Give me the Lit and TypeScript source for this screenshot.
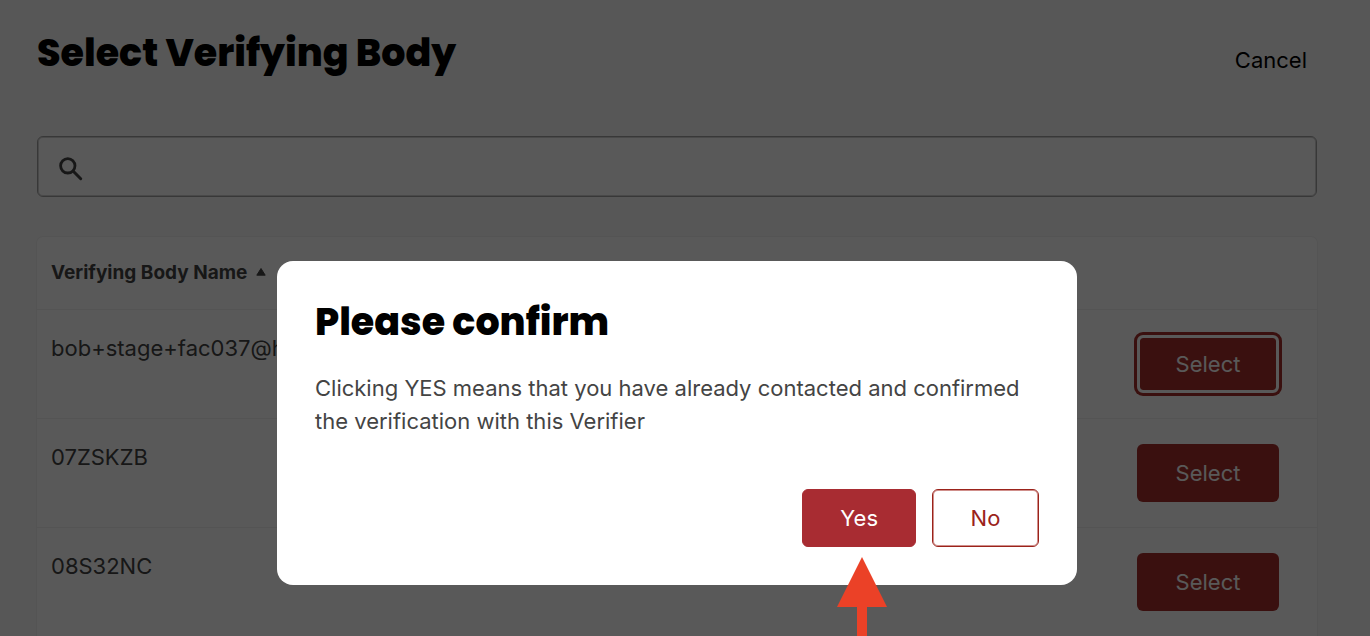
import { LitElement, html, css } from "lit";
import { customElement, property, state } from "lit/decorators.js";

@customElement("confirm-dialog")
class ConfirmDialog extends LitElement {
  @property() heading = "";
  @property() message = "";

  static styles = css`
    :host {
      position: fixed;
      inset: 0;
      box-sizing: border-box;
      display: flex;
      justify-content: center;
      align-items: flex-start;
      padding: 261px 53px 0 37px;
      overflow: hidden;
      background: rgba(0, 0, 0, 0.65);
    }
    .panel {
      box-sizing: border-box;
      width: 100%;
      max-width: 800px;
      padding: 38px;
      border-radius: 16px;
      background: #fff;
    }
    .title {
      margin: 0;
      color: #000;
      font-family: Poppins, Inter, sans-serif;
      font-size: 38px;
      font-weight: 800;
      line-height: 46px;
    }
    .message {
      margin: 27px 0 51px;
      color: #444;
      font-size: 22px;
      line-height: 33px;
    }
    .actions {
      display: flex;
      justify-content: flex-end;
      gap: 16px;
    }
    .anchor {
      position: relative;
      display: flex;
    }
    .button {
      box-sizing: border-box;
      height: 58px;
      min-width: 107px;
      padding: 0 37px;
      border: 1px solid #a82c32;
      border-radius: 6px;
      background: #a82c32;
      color: #fff;
      font: inherit;
      font-size: 22px;
      line-height: 33px;
      cursor: pointer;
    }
    .outline {
      border-color: #9b231b;
      box-shadow: inset 0 0 0 1px #d08f8b;
      background: #fff;
      color: #9b231b;
    }
    .pointer {
      position: absolute;
      top: 100%;
      left: 50%;
      width: 50px;
      height: 120px;
      margin: 10px 0 0 -22px;
      pointer-events: none;
    }
  `;

  render() {
    return html`
      <section class="panel" role="dialog" aria-modal="true" aria-labelledby="title" aria-describedby="message">
        <h2 class="title" id="title">${this.heading}</h2>
        <p class="message" id="message">${this.message}</p>
        <div class="actions">
          <div class="anchor">
            <button class="button" type="button">Yes</button>
            <svg class="pointer" viewBox="0 0 50 120" aria-hidden="true">
              <path fill="#eb4127" d="M25 0 50 50H30V120H20V50H0Z" />
            </svg>
          </div>
          <button class="button outline" type="button">No</button>
        </div>
      </section>
    `;
  }
}

@customElement("app-root")
class AppRoot extends LitElement {
  @state() bodies = ["bob+stage+fac037@h", "07ZSKZB", "08S32NC"];
  @state() pending = 0;

  static styles = css`
    :host {
      display: block;
      box-sizing: border-box;
      min-height: 100vh;
      padding: 0 53px 0 37px;
      background: #f9f9f9;
      color: #444;
      font-family: Inter, "Liberation Sans", sans-serif;
      font-size: 22px;
      line-height: 33px;
    }
    .header {
      display: flex;
      justify-content: space-between;
      align-items: flex-start;
      padding: 30px 10px 59px 0;
    }
    .title {
      margin: 0;
      color: #000;
      font-family: Poppins, Inter, sans-serif;
      font-size: 38px;
      font-weight: 800;
      line-height: 46px;
    }
    .cancel {
      margin-top: 14px;
      color: #000;
      text-decoration: none;
    }
    .search {
      display: flex;
      align-items: center;
      gap: 16px;
      box-sizing: border-box;
      height: 61px;
      padding: 0 21px;
      border: 1px solid #a0a0a0;
      border-radius: 6px;
      box-shadow: inset 0 0 0 1px #d2d2d2;
      background: #fff;
    }
    .search-icon {
      flex: none;
      width: 24px;
      height: 24px;
      margin-top: 4px;
    }
    .field {
      flex: 1;
      min-width: 0;
      border: 0;
      outline: 0;
      background: none;
      font: inherit;
    }
    .card {
      margin-top: 40px;
      border-radius: 6px 6px 0 0;
      box-shadow: 0 0 0 1px #f0f0f0;
      background: #fff;
    }
    .table {
      width: 100%;
      border-collapse: separate;
      border-spacing: 0;
    }
    .head {
      height: 73px;
      box-sizing: border-box;
      padding: 0 14px;
      border-bottom: 1px solid #f0f0f0;
      font-size: 19px;
      font-weight: 700;
      line-height: 24px;
      text-align: left;
    }
    .sort {
      width: 10px;
      height: 8px;
      margin-left: 4px;
      vertical-align: 3px;
    }
    .cell {
      height: 109px;
      box-sizing: border-box;
      padding: 22px 14px 0;
      border-bottom: 1px solid #f0f0f0;
      vertical-align: top;
    }
    .action {
      padding-right: 38px;
      text-align: right;
    }
    .select {
      box-sizing: border-box;
      width: 142px;
      height: 58px;
      margin-top: 3px;
      border: 0;
      border-radius: 6px;
      background: #a6302b;
      color: #fff;
      font: inherit;
      cursor: pointer;
    }
    .active {
      border: 3px solid #fff;
      border-radius: 6px;
      box-shadow: 0 0 0 3px #a6302b;
      background-clip: padding-box;
    }
  `;

  render() {
    return html`
      <header class="header">
        <h1 class="title">Select Verifying Body</h1>
        <a class="cancel" href="#">Cancel</a>
      </header>
      <label class="search">
        <svg class="search-icon" viewBox="0 0 24 24" fill="none" stroke="#444" aria-hidden="true">
          <circle cx="8.8" cy="8.8" r="7.2" stroke-width="2.8" />
          <path d="m14.3 14.3 7.4 7.4" stroke-width="3" stroke-linecap="round" />
        </svg>
        <input class="field" type="search" aria-label="Search verifying bodies" />
      </label>
      <main class="card">
        <table class="table">
          <thead>
            <tr>
              <th class="head" scope="col" aria-sort="ascending">
                Verifying Body Name
                <svg class="sort" viewBox="0 0 10 8" aria-hidden="true">
                  <path fill="#444" d="M5 .5 9.2 7.2H.8Z" stroke="#444" stroke-linejoin="round" />
                </svg>
              </th>
              <td class="head"></td>
            </tr>
          </thead>
          <tbody>
            ${this.bodies.map(
              (name, i) => html`
                <tr>
                  <td class="cell">${name}</td>
                  <td class="cell action">
                    <button class="select ${i === this.pending ? "active" : ""}" type="button">Select</button>
                  </td>
                </tr>
              `
            )}
          </tbody>
        </table>
      </main>
      <confirm-dialog
        heading="Please confirm"
        message="Clicking YES means that you have already contacted and confirmed the verification with this Verifier"
      ></confirm-dialog>
    `;
  }
}
